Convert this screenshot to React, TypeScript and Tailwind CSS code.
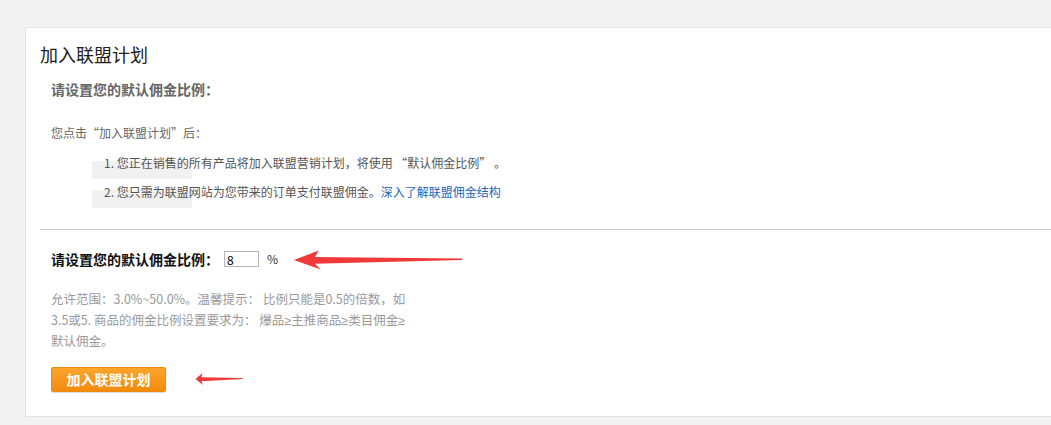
import React from 'react'

const font = { fontFamily: '"Noto Sans CJK SC", "Liberation Sans", sans-serif' }

function Arrow({ width, height }: { width: number; height: number }) {
  // red hand-drawn style arrow pointing left
  return (
    <svg width={width} height={height} viewBox="0 0 180 30" preserveAspectRatio="none">
      <path d="M2 15 L28 2 L24 11 L178 13 L178 15 L24 20 L30 28 Z" fill="#f03a3a" />
    </svg>
  )
}

function Ge() {
  return <span className="font-['Liberation_Sans']">≥</span>
}

export default function App() {
  return (
    <div className="w-[1051px] h-[425px] bg-[#f2f2f2] pt-[27px] pl-[25px] overflow-hidden" style={font}>
      <div className="h-[390px] bg-white border border-[#e3e3e3] border-r-0 pl-[14px] pt-[14px]">
        <h2 className="text-[18px] leading-[24px] text-[#222]">加入联盟计划</h2>

        <div className="pl-[11px] pt-[14px]">
          <p className="text-[14px] leading-[18px] font-bold text-[#666]">请设置您的默认佣金比例：</p>
          <p className="mt-[26px] text-[12px] leading-[18px] text-[#666]">您点击“加入联盟计划”后：</p>
          <ul className="mt-[12px] text-[12px] leading-[18px] text-[#555] pl-[53px]">
            <li className="relative">
              <span className="absolute left-[-12px] top-[7px] w-[100px] h-[18px] bg-[#f1f1f1]" />
              <span className="relative">1. 您正在销售的所有产品将加入联盟营销计划，将使用 “默认佣金比例” 。</span>
            </li>
            <li className="relative mt-[11px]">
              <span className="absolute left-[-12px] top-[7px] w-[100px] h-[18px] bg-[#f1f1f1]" />
              <span className="relative">
                2. 您只需为联盟网站为您带来的订单支付联盟佣金。
                <a className="text-[#1a66b8]">深入了解联盟佣金结构</a>
              </span>
            </li>
          </ul>
        </div>

        <div className="mt-[28px] border-t border-[#cccccc]" />

        <div className="pl-[11px] pt-[19px]">
          <div className="flex items-center h-[20px]">
            <span className="text-[14px] font-bold text-[#111]">请设置您的默认佣金比例：</span>
            <input
              defaultValue="8"
              className="ml-[5px] w-[35px] h-[16px] border border-[#b5b5b5] text-[12px] px-[2px] leading-[14px] text-black outline-none"
            />
            <span className="ml-[8px] text-[12px] text-[#333]">%</span>
            <span className="ml-[14px] mt-[2px] flex">
              <Arrow width={172} height={22} />
            </span>
          </div>

          <p className="mt-[20px] w-[380px] text-[12.5px] leading-[20.5px] text-[#9a9a9a]">
            允许范围：3.0%~50.0%。温馨提示： 比例只能是0.5的倍数，如<br />
            3.5或5. 商品的佣金比例设置要求为： 爆品<Ge />主推商品<Ge />类目佣金<Ge /><br />
            默认佣金。
          </p>

          <div className="mt-[15px] flex items-center">
            <button className="w-[115px] h-[25px] rounded-[2px] bg-gradient-to-b from-[#fca52a] to-[#f28b0c] border border-[#ee8a0e] text-white text-[14px] font-bold shadow-[0_1px_1px_rgba(0,0,0,0.15)]">
              加入联盟计划
            </button>
            <span className="ml-[29px] flex">
              <Arrow width={48} height={14} />
            </span>
          </div>
        </div>
      </div>
    </div>
  )
}
